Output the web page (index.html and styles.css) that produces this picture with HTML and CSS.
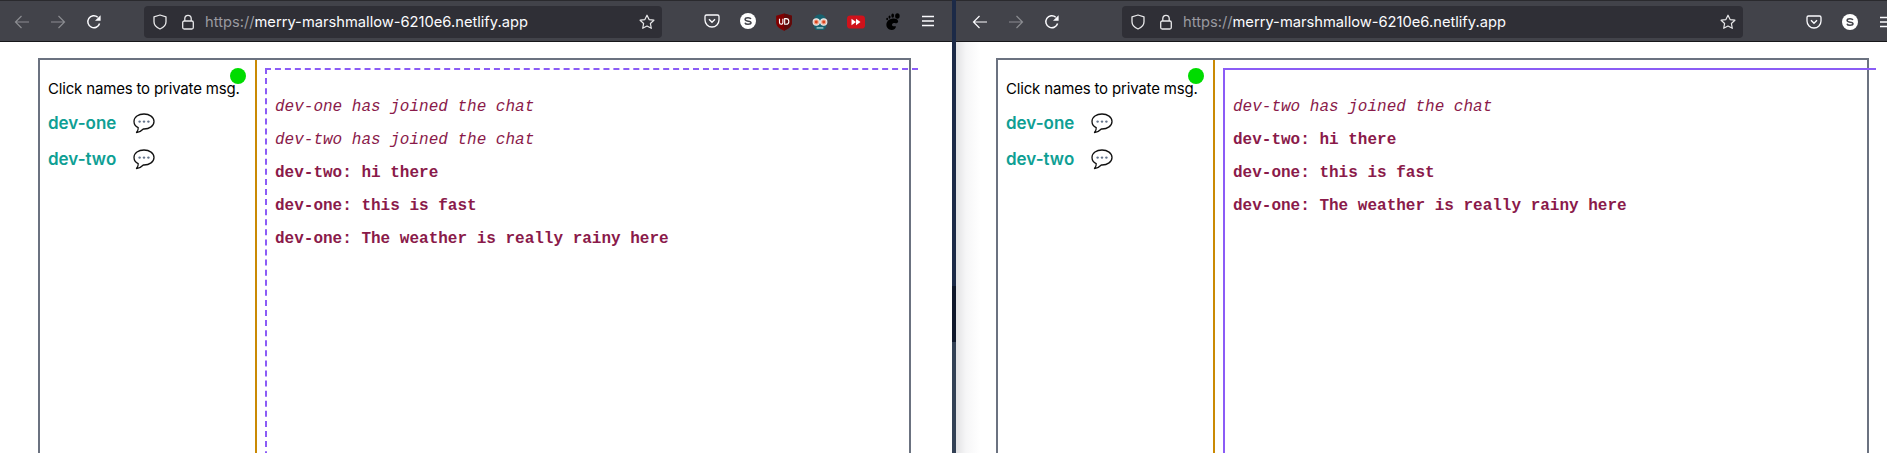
FILE: index.html
```html
<!DOCTYPE html>
<html lang="en">
<head>
<meta charset="utf-8">
<title>Chat</title>
<link rel="stylesheet" href="styles.css">
</head>
<body>
<svg class="defs" width="0" height="0" aria-hidden="true">
  <symbol id="i-back" viewBox="0 0 16 16"><path d="M15 8H1.5M7.5 2 1.5 8l6 6" fill="none" stroke="currentColor" stroke-width="1.2"/></symbol>
  <symbol id="i-fwd" viewBox="0 0 16 16"><path d="M1 8h13.5M8.5 2l6 6-6 6" fill="none" stroke="currentColor" stroke-width="1.2"/></symbol>
  <symbol id="i-reload" viewBox="0 0 16 16"><path d="M13.6 9.5A6 6 0 1 1 11.8 3.2" fill="none" stroke="currentColor" stroke-width="1.5"/><path d="M14.6 1.2v5.6H9z" fill="currentColor"/></symbol>
  <symbol id="i-shield" viewBox="0 0 16 16"><path d="M8 1 2 2.8v5c0 3.4 3 6 6 7.2 3-1.200 6-3.800 6-7.200v-5z" fill="none" stroke="currentColor" stroke-width="1.300" stroke-linejoin="round"/></symbol>
  <symbol id="i-lock" viewBox="0 0 16 16"><path d="M4.800 7V4.500a3.200 3.200 0 0 1 6.400 0V7" fill="none" stroke="currentColor" stroke-width="1.300"/><rect x="2.700" y="7" width="10.600" height="8" rx="1.500" fill="none" stroke="currentColor" stroke-width="1.300"/></symbol>
  <symbol id="i-star" viewBox="0 0 16 16"><path d="m8 1.200 2.100 4.400 4.800.6-3.500 3.300.9 4.800L8 12l-4.300 2.300.9-4.800L1.100 6.200l4.800-.6z" fill="none" stroke="currentColor" stroke-width="1.200" stroke-linejoin="round"/></symbol>
  <symbol id="i-pocket" viewBox="0 0 16 16"><path d="M2.500 2h11A1.500 1.500 0 0 1 15 3.500V7A7 7 0 0 1 1 7V3.500A1.500 1.500 0 0 1 2.500 2z" fill="none" stroke="currentColor" stroke-width="1.300"/><path d="m5 6.200 3 3 3-3" fill="none" stroke="currentColor" stroke-width="1.400"/></symbol>
  <symbol id="i-menu" viewBox="0 0 16 16"><path d="M2 3.500h12M2 8h12M2 12.500h12" stroke="currentColor" stroke-width="1.300"/></symbol>
  <symbol id="i-s" viewBox="0 0 16 16"><circle cx="8" cy="8" r="8" fill="#fff"/><path d="M10.900 6.100C10.500 5 9.400 4.800 8 4.800c-1.500 0-2.900.5-2.900 1.700 0 2.500 5.900 1 5.900 3.300 0 1.100-1.300 1.500-3 1.500-1.500 0-2.700-.4-3-1.600" fill="none" stroke="#42434a" stroke-width="1.500"/></symbol>
  <symbol id="i-ublock" viewBox="0 0 16 16"><path d="M8 .5 15 2.500v6c0 3.500-3.500 6-7 7.200-3.500-1.200-7-3.700-7-7.200v-6z" fill="#800000"/><path d="M8 .5 15 2.500v6c0 3.500-3.500 6-7 7.200z" fill="#5f0a0a"/><path d="M4 5v3.500a1.500 1.500 0 0 0 3 0V5M8.600 5v5h1.200a2.500 2.500 0 0 0 0-5z" fill="none" stroke="#fff" stroke-width="1"/></symbol>
  <symbol id="i-mask" viewBox="0 0 16 16"><path d="M2.500 7a5.500 6 0 0 1 11 0v5.500L11.500 15h-7l-2-2.500z" fill="#17616e"/><path d="M5 12.500h6v1.500H5z" fill="#8fb8bd"/><circle cx="4.700" cy="8" r="2.800" fill="#f1a58c" stroke="#e8e8e8"/><circle cx="11.300" cy="8" r="2.800" fill="#f1a58c" stroke="#e8e8e8"/><circle cx="4.700" cy="8" r="1.300" fill="#d9451e"/><circle cx="11.300" cy="8" r="1.300" fill="#d9451e"/></symbol>
  <symbol id="i-red" viewBox="0 0 16 16"><rect y="2.200" width="16" height="11.600" rx="3" fill="#d0121b"/><path d="M4 5.200 8 8 4 10.800zM8 5.200 12 8l-4 2.800z" fill="#fff"/></symbol>
  <symbol id="i-gnome" viewBox="0 0 16 16"><ellipse cx="12.800" cy="2.600" rx="2" ry="2.400" fill="#000"/><ellipse cx="8.600" cy="2.400" rx="1.200" ry="1.900" fill="#000"/><ellipse cx="5.800" cy="3.600" rx=".9" ry="1.400" fill="#000"/><ellipse cx="3.700" cy="5.400" rx=".8" ry="1.100" fill="#000"/><path d="M8 5c3-.5 5.500.5 5.500 2.500 0 1.400-1.500 1.600-2.500 1.500-1.700-.2-3 .3-3 1.400 0 1.200 1.600 1.800 3.500 1.300 0 2-1.700 3.300-3.800 3.300C4.800 15 3 13 3 10.500 3 7.500 5 5.500 8 5z" fill="#000"/></symbol>
  <symbol id="i-bubble" viewBox="0 0 22 21"><path d="M11 1C5.500 1 1 4.100 1 8.500c0 2.700 1.700 4.900 4.200 6.200.2 1.600-.4 3.300-1.700 4.800 2.500-.2 5-1.500 6.800-3.500H11c5.500 0 10-3.200 10-7.500S16.500 1 11 1z" fill="#fff" stroke="#111" stroke-width="1.300" stroke-linejoin="round"/><circle cx="6.600" cy="8.600" r="1.200" fill="#64748b"/><circle cx="11" cy="8.600" r="1.200" fill="#64748b"/><circle cx="15.400" cy="8.600" r="1.200" fill="#64748b"/></symbol>
</svg>

<div class="desktop">
  <section class="window window-left">
    <header class="toolbar">
      <svg class="tb-icon dim"><use href="#i-back"/></svg>
      <svg class="tb-icon dim"><use href="#i-fwd"/></svg>
      <svg class="tb-icon"><use href="#i-reload"/></svg>
      <div class="urlbar">
        <svg class="url-icon"><use href="#i-shield"/></svg>
        <svg class="url-icon"><use href="#i-lock"/></svg>
        <span class="url"><span class="url-scheme">https://</span>merry-marshmallow-6210e6.netlify.app</span>
        <svg class="url-star"><use href="#i-star"/></svg>
      </div>
      <div class="extensions">
        <svg class="tb-icon"><use href="#i-pocket"/></svg>
        <svg class="tb-icon"><use href="#i-s"/></svg>
        <svg class="tb-icon ext-large"><use href="#i-ublock"/></svg>
        <svg class="tb-icon ext-large"><use href="#i-mask"/></svg>
        <svg class="tb-icon ext-large"><use href="#i-red"/></svg>
        <svg class="tb-icon ext-large"><use href="#i-gnome"/></svg>
        <svg class="tb-icon"><use href="#i-menu"/></svg>
      </div>
    </header>
    <main class="page">
      <div class="chat">
        <aside class="users">
          <span class="status-dot"></span>
          <p class="hint">Click names to private msg.</p>
          <div class="user"><a class="user-name">dev-one</a><svg class="bubble"><use href="#i-bubble"/></svg></div>
          <div class="user"><a class="user-name">dev-two</a><svg class="bubble"><use href="#i-bubble"/></svg></div>
        </aside>
        <div class="messages dashed">
          <p class="msg event">dev-one has joined the chat</p>
          <p class="msg event">dev-two has joined the chat</p>
          <p class="msg">dev-two: hi there</p>
          <p class="msg">dev-one: this is fast</p>
          <p class="msg">dev-one: The weather is really rainy here</p>
        </div>
      </div>
    </main>
  </section>

  <div class="divider"></div>

  <section class="window window-right">
    <header class="toolbar">
      <svg class="tb-icon bright"><use href="#i-back"/></svg>
      <svg class="tb-icon dim"><use href="#i-fwd"/></svg>
      <svg class="tb-icon"><use href="#i-reload"/></svg>
      <div class="urlbar">
        <svg class="url-icon"><use href="#i-shield"/></svg>
        <svg class="url-icon"><use href="#i-lock"/></svg>
        <span class="url"><span class="url-scheme">https://</span>merry-marshmallow-6210e6.netlify.app</span>
        <svg class="url-star"><use href="#i-star"/></svg>
      </div>
      <div class="extensions">
        <svg class="tb-icon"><use href="#i-pocket"/></svg>
        <svg class="tb-icon"><use href="#i-s"/></svg>
        <svg class="tb-icon"><use href="#i-menu"/></svg>
      </div>
    </header>
    <main class="page">
      <div class="chat">
        <aside class="users">
          <span class="status-dot"></span>
          <p class="hint">Click names to private msg.</p>
          <div class="user"><a class="user-name">dev-one</a><svg class="bubble"><use href="#i-bubble"/></svg></div>
          <div class="user"><a class="user-name">dev-two</a><svg class="bubble"><use href="#i-bubble"/></svg></div>
        </aside>
        <div class="messages solid">
          <p class="msg event">dev-two has joined the chat</p>
          <p class="msg">dev-two: hi there</p>
          <p class="msg">dev-one: this is fast</p>
          <p class="msg">dev-one: The weather is really rainy here</p>
        </div>
      </div>
    </main>
  </section>
</div>
</body>
</html>
```
FILE: styles.css
```css
* { box-sizing: border-box; }
html, body { margin: 0; height: 100%; overflow: hidden; background: #fff; }
.defs { position: absolute; }

.desktop { display: flex; width: 1887px; height: 453px; overflow: hidden; }
.window { display: flex; flex-direction: column; flex: none; overflow: hidden; }
.window-left { width: 952px; }
.window-right { width: 931px; }
.divider {
  width: 4px; flex: none;
  background: linear-gradient(#1c2a47 0, #1c2a47 286px, #0f172a 286px, #0f172a 342px, #334155 342px);
}

.toolbar {
  display: flex; align-items: center; flex: none;
  height: 42px; padding: 1px 0 0 14px;
  background: #42434a; border-top: 1px solid #2a2a2e; border-bottom: 1px solid #17171a;
  color: #fbfbfe;
}
.window-right .toolbar { padding-left: 16px; }
.tb-icon { width: 16px; height: 16px; margin-right: 20px; flex: none; color: #fbfbfe; }
.tb-icon.dim { color: #8b8c91; }
.tb-icon.bright { color: #fbfbfe; }
.ext-large { width: 18px; height: 18px; margin: 0 19px 0 -1px; }

.urlbar {
  display: flex; align-items: center; flex: none;
  height: 32px; margin-left: 22px; padding: 0 7px 0 8px;
  background: #2f2f36; border-radius: 4px;
}
.window-left .urlbar { width: 518px; }
.window-right .urlbar { width: 621px; margin-left: 42px; }
.url-icon { width: 16px; height: 16px; margin-right: 12px; flex: none; color: #e8e8ea; }
.url-icon + .url-icon { margin-right: 9px; }
.url { flex: 1; font: 400 14.700px/20px Inter, sans-serif; color: #fbfbfe; white-space: nowrap; }
.url-scheme { color: #9a9aa0; }
.url-star { width: 16px; height: 16px; flex: none; color: #e8e8ea; }

.extensions { display: flex; flex: none; margin-left: 42px; }
.window-right .extensions { margin-left: 63px; }

.page { flex: 1; min-height: 0; background: #fff; }
.window-left .page { padding: 16px 0 0 38px; }
.window-right .page {
  padding: 16px 0 0 40px;
  background: linear-gradient(90deg, #e2e2e4 0, #f6f6f7 10px, #fff 24px);
}

.chat {
  display: flex; width: 873px; height: 500px;
  border: 2px solid #6b7280; background: #fff;
}
.users {
  position: relative; flex: none; width: 217px;
  padding: 19px 0 0 8px;
  border-right: 2px solid #ca8a04;
  background: #fff;
}
.status-dot {
  position: absolute; top: 8px; left: 190px;
  width: 16px; height: 16px; border-radius: 50%; background: #00dc00;
}
.hint {
  margin: 0 0 6px; font: 400 15px/20px Inter, sans-serif; color: #000; white-space: nowrap;
  letter-spacing: -.17px;
}
.user { display: flex; align-items: center; height: 36px; }
.user-name {
  width: 85px; font: 600 17px/20px Inter, sans-serif; color: #0f9f94;
}
.bubble { width: 22px; height: 21px; flex: none; }

.messages {
  flex: none; width: 653px; height: 490px;
  margin: 8px 0 0 8px; padding: 28px 0 0 8px;
}
.dashed { border-top: 2px dashed #8b5cf6; border-left: 2px dashed #8b5cf6; }
.solid { border-top: 2px solid #8b5cf6; border-left: 2px solid #8b5cf6; }
.msg {
  margin: 0 0 15px; font: 700 16px/18px "Liberation Mono", monospace; color: #8a1a4a;
}
.event { font-weight: 400; font-style: italic; }
```
